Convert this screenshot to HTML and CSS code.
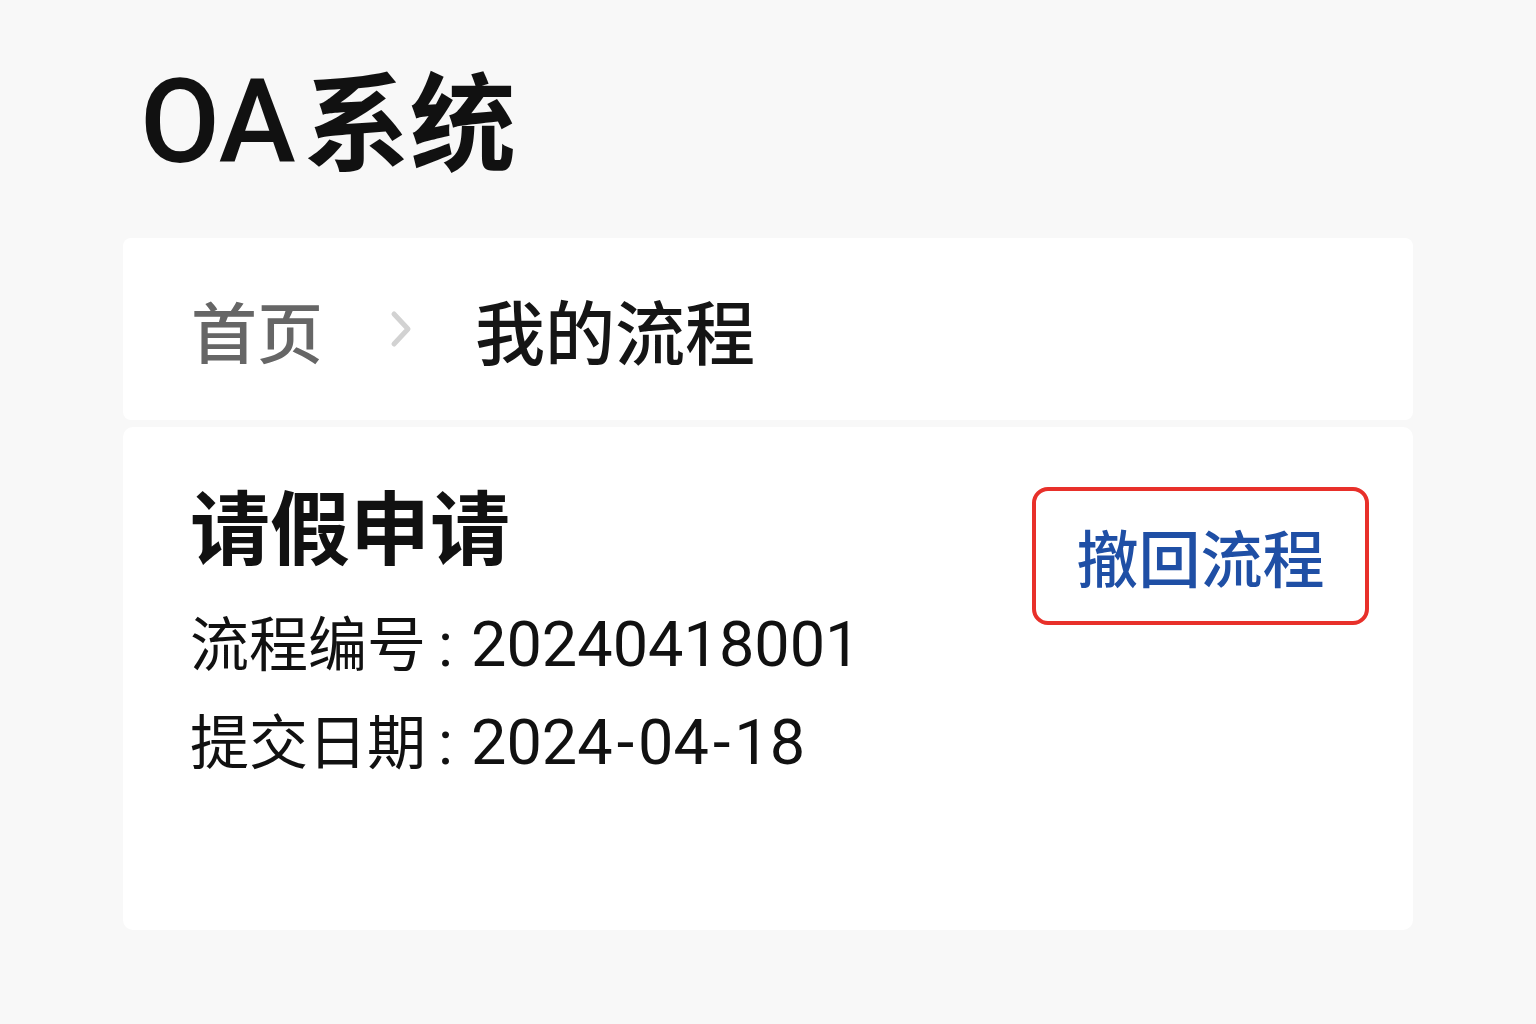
FILE: index.html
```html
<!DOCTYPE html>
<html lang="zh-CN">
<head>
<meta charset="utf-8">
<title>OA系统</title>
<link rel="stylesheet" href="styles.css">
</head>
<body>
<div class="page">
  <h1 class="app-title"><span class="title-latin">OA</span><span class="title-cjk">系统</span></h1>
  <nav class="crumbs">
    <span class="crumb-home">首页</span>
    <svg class="crumb-sep" width="24" height="40" viewBox="0 0 24 40"><path d="M5 5 L19 20 L5 35" fill="none" stroke="#d2d2d2" stroke-width="5" stroke-linecap="round" stroke-linejoin="round"/></svg>
    <span class="crumb-current">我的流程</span>
  </nav>
  <section class="card">
    <div class="card-info">
      <h2 class="card-title">请假申请</h2>
      <div class="info-row"><span class="info-label">流程编号</span><span class="info-colon">:</span><span class="info-value">20240418001</span></div>
      <div class="info-row"><span class="info-label">提交日期</span><span class="info-colon">:</span><span class="info-value">2024<span class="dash">-</span>04<span class="dash">-</span>18</span></div>
    </div>
    <button class="btn-revoke">撤回流程</button>
  </section>
</div>
</body>
</html>
```

FILE: styles.css
```css
* { box-sizing: border-box; }
body {
  margin: 0;
  background: #f8f8f8;
  font-family: "Noto Sans CJK SC", "Noto Sans", sans-serif;
  color: #111;
}
.page {
  width: 1536px;
  height: 1024px;
  padding: 56px 123px 0 123px;
}
.app-title {
  margin: 0 0 0 17px;
  height: 120px;
  line-height: 120px;
  font-weight: 700;
  color: #111;
  display: flex;
  align-items: baseline;
}
.title-latin {
  font-family: Roboto, "Noto Sans", sans-serif;
  font-size: 116px;
  font-weight: 500;
  margin-right: 8px;
}
.title-cjk {
  font-size: 106px;
  font-weight: 700;
}
.crumbs {
  margin-top: 62px;
  height: 182px;
  background: #fff;
  border-radius: 8px;
  display: flex;
  align-items: center;
  padding-left: 68px;
}
.crumb-home {
  font-size: 66px;
  color: #666;
  font-weight: 500;
}
.crumb-sep {
  margin: 0 62px 0 66px;
}
.crumb-current {
  font-size: 70px;
  color: #151515;
  font-weight: 500;
}
.card {
  margin-top: 7px;
  height: 503px;
  background: #fff;
  border-radius: 10px;
  display: flex;
  justify-content: space-between;
  align-items: flex-start;
  padding: 48px 44px 0 67px;
}
.card-title {
  margin: 0 0 23px 0;
  font-size: 80px;
  line-height: 96px;
  font-weight: 700;
  color: #111;
}
.info-row {
  display: flex;
  align-items: baseline;
  line-height: 94px;
  color: #111;
}
.info-label {
  font-size: 59px;
}
.info-colon {
  font-family: Roboto, sans-serif;
  font-size: 62px;
  margin: 0 18px 0 12px;
}
.info-value {
  font-family: Roboto, sans-serif;
  font-size: 63px;
}
.dash {
  margin: 0 4px;
}
.btn-revoke {
  margin-top: 12px;
  width: 337px;
  height: 138px;
  background: #fff;
  border: 4px solid #e8302a;
  border-radius: 16px;
  font-family: "Noto Sans CJK SC", sans-serif;
  font-size: 62px;
  font-weight: 500;
  color: #1f4fa5;
  padding: 0;
}
```
